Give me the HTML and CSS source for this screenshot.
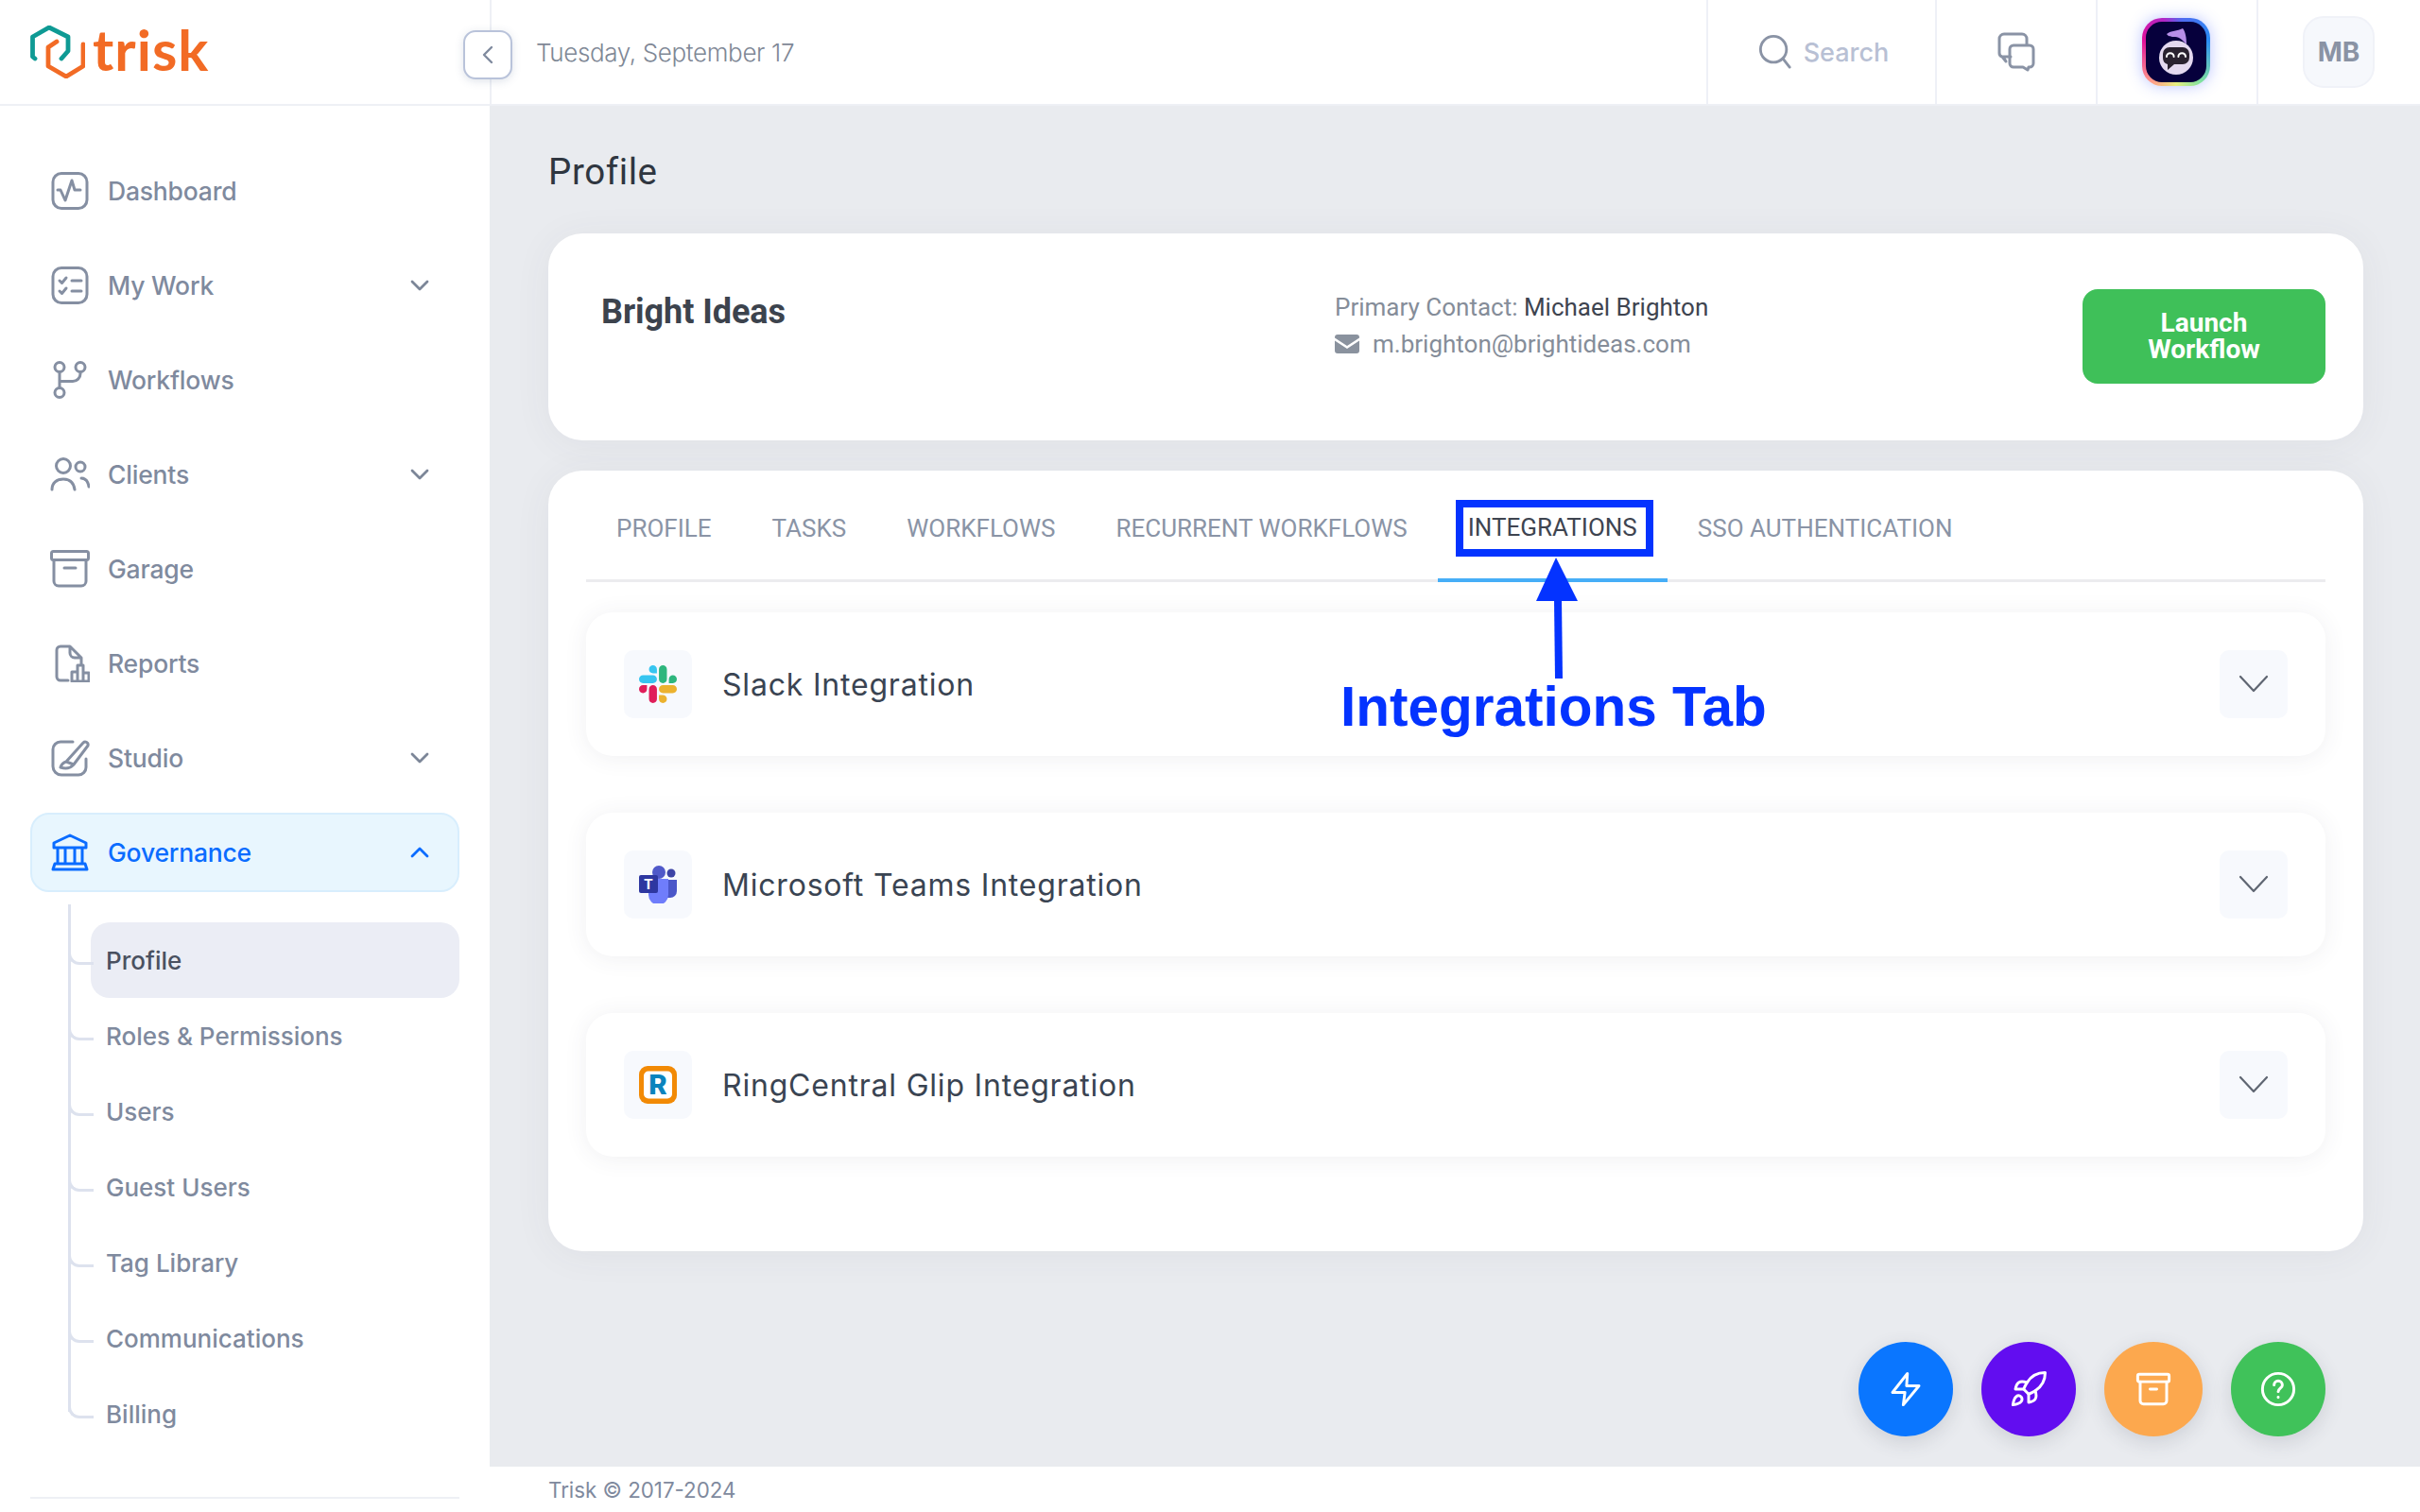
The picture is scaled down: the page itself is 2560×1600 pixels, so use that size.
FILE: index.html
```html
<!DOCTYPE html>
<html lang="en">
<head>
<meta charset="utf-8">
<title>Trisk - Profile</title>
<link rel="stylesheet" href="styles.css">
</head>
<body>
<div class="app">
  <header class="topbar">
    <div class="brand">
      <svg class="logo-mark" viewBox="0 0 58 56" fill="none" stroke-width="4.800" stroke-linecap="round" stroke-linejoin="round">
        <path d="M5 35 L2.500 33 V12 L20 2 L40 12 V27 L33 35" stroke="#0e9a94"/>
        <path d="M28 17 L19 23 V43 L38 54 L56 43 V20" stroke="#f26b25"/>
      </svg>
      <span class="logo-word">trisk</span>
    </div>
    <button class="collapse" type="button" aria-label="Collapse">
      <svg viewBox="0 0 14 20" fill="none" stroke="#7f8a9e" stroke-width="2.400" stroke-linecap="round" stroke-linejoin="round"><path d="M11 2 3 10l8 8"/></svg>
    </button>
    <div class="date">Tuesday, September 17</div>
    <div class="cell cell-search">
      <svg class="ico-search" viewBox="0 0 38 38" fill="none" stroke="#8a93a5" stroke-width="3" stroke-linecap="round"><circle cx="17" cy="16" r="14.500"/><path d="M28 27l7 9"/></svg>
      <span class="search-text">Search</span>
    </div>
    <div class="cell cell-chat">
      <svg class="ico-chat" viewBox="0 0 40 42" fill="none" stroke="#8a93a5" stroke-width="3" stroke-linejoin="round" stroke-linecap="round"><path d="M14 26H6l3 5-4-5a4 4 0 0 1-3-4V7a5 5 0 0 1 5-5h19a5 5 0 0 1 5 5v6"/><path d="M17 14h17a4 4 0 0 1 4 4v15a4 4 0 0 1-4 4h-1l-1 3-5-3H17a4 4 0 0 1-4-4V18a4 4 0 0 1 4-4z"/></svg>
    </div>
    <div class="cell cell-bot">
      <div class="bot">
        <svg viewBox="0 0 64 64">
          <path d="M22 13c5-4 11-3 17-6 3 4 4 10 4 17-4-4-7-8-12-8-4 0-7 0-9-3z" fill="#b78fe8"/>
          <circle cx="32" cy="38" r="18" fill="#e4d9f0"/>
          <path d="M25 27h14a7 7 0 0 1 7 7v4a7 7 0 0 1-7 7H30l-7 6v-6a7 7 0 0 1-5-7v-4a7 7 0 0 1 7-7z" fill="#2a2230"/>
          <path d="M22 37a3.800 3.800 0 0 1 7.600 0M34.400 37a3.800 3.800 0 0 1 7.600 0" fill="none" stroke="#fff" stroke-width="2" stroke-linecap="round"/>
        </svg>
      </div>
    </div>
    <div class="cell cell-user"><div class="initials">MB</div></div>
  </header>

  <div class="shell">
    <aside class="sidebar">
      <nav class="nav">
        <a class="nav-item">
          <svg class="nav-ico" viewBox="0 0 42 40" fill="none"><rect x="3" y="1.500" width="36" height="37" rx="9"/><path d="M8 19h3l5 11 7-21 3 10h6"/></svg>
          <span class="nav-label">Dashboard</span>
        </a>
        <a class="nav-item">
          <svg class="nav-ico" viewBox="0 0 42 40" fill="none"><rect x="3" y="1.500" width="36" height="37" rx="9"/><path d="M10 15l2.500 2.500L17 12M10 26l2.500 2.500L17 23M23 15h10M23 26h10"/></svg>
          <span class="nav-label">My Work</span>
          <svg class="chev" viewBox="0 0 20 12" fill="none"><path d="M2 2l8 8 8-8"/></svg>
        </a>
        <a class="nav-item">
          <svg class="nav-ico" viewBox="0 0 42 40" fill="none"><circle cx="10" cy="6.500" r="5"/><circle cx="32" cy="6.500" r="5"/><circle cx="10" cy="33.500" r="5"/><path d="M10 11.500v17M32 11.500v2a8 8 0 0 1-8 8H10"/></svg>
          <span class="nav-label">Workflows</span>
        </a>
        <a class="nav-item">
          <svg class="nav-ico" viewBox="0 0 42 40" fill="none"><circle cx="14" cy="11" r="7.500"/><circle cx="32" cy="12" r="5"/><path d="M2 36c0-7 5-11 12-11s11 4 12 11M33 24c4 0 7 3 8 9"/></svg>
          <span class="nav-label">Clients</span>
          <svg class="chev" viewBox="0 0 20 12" fill="none"><path d="M2 2l8 8 8-8"/></svg>
        </a>
        <a class="nav-item">
          <svg class="nav-ico" viewBox="0 0 42 40" fill="none"><rect x="1.500" y="1.500" width="39" height="9" rx="2"/><path d="M4 10.500V33a5 5 0 0 0 5 5h24a5 5 0 0 0 5-5V10.500M15 19h12"/></svg>
          <span class="nav-label">Garage</span>
        </a>
        <a class="nav-item">
          <svg class="nav-ico" viewBox="0 0 42 40" fill="none"><path d="M19 38H11a4 4 0 0 1-4-4V6a4 4 0 0 1 4-4h10l12 12v7M21 2v7a5 5 0 0 0 5 5h7"/><path d="M23 39V29h6v10M29 39V22h6v17M35 30h6v9H23"/></svg>
          <span class="nav-label">Reports</span>
        </a>
        <a class="nav-item">
          <svg class="nav-ico" viewBox="0 0 42 40" fill="none"><path d="M24 3H11a8 8 0 0 0-8 8v18a9 9 0 0 0 9 9h18a8 8 0 0 0 8-8V21"/><path d="M17 24L35 4a3 3 0 0 1 5 3L25 27M17 24c-4 1-5 3-6 6 3 1 9 2 13-2l1-1-8-3z"/></svg>
          <span class="nav-label">Studio</span>
          <svg class="chev" viewBox="0 0 20 12" fill="none"><path d="M2 2l8 8 8-8"/></svg>
        </a>
        <a class="nav-item nav-item-active">
          <svg class="nav-ico" viewBox="0 0 42 40" fill="none"><path d="M4 15V10L21 2l17 8v5zM8 15v17M16 15v17M26 15v17M34 15v17M5 32h32M3 38l2-6h32l2 6z"/></svg>
          <span class="nav-label">Governance</span>
          <svg class="chev" viewBox="0 0 20 12" fill="none"><path d="M2 10l8-8 8 8"/></svg>
        </a>
      </nav>
      <div class="subnav">
        <a class="sub-item sub-item-active">Profile</a>
        <a class="sub-item">Roles &amp; Permissions</a>
        <a class="sub-item">Users</a>
        <a class="sub-item">Guest Users</a>
        <a class="sub-item">Tag Library</a>
        <a class="sub-item">Communications</a>
        <a class="sub-item">Billing</a>
      </div>
      <div class="side-rule"></div>
    </aside>

    <main class="main">
      <div class="content">
        <h1 class="page-title">Profile</h1>
        <section class="card card-head">
          <div class="org">Bright Ideas</div>
          <div class="contact">
            <div class="contact-line">Primary Contact: <span class="contact-name">Michael Brighton</span></div>
            <div class="contact-line contact-mail">
              <svg class="mail" viewBox="0 0 26 20"><path d="M0 3a3 3 0 0 1 3-3h20a3 3 0 0 1 3 3v.500L13 12 0 3.500zM0 6.500V17a3 3 0 0 0 3 3h20a3 3 0 0 0 3-3V6.500L13 15z" fill="#8a929e"/></svg>
              m.brighton@brightideas.com
            </div>
          </div>
          <button class="launch" type="button">Launch<br>Workflow</button>
        </section>

        <section class="card card-tabs">
          <div class="tabs">
            <a class="tab">PROFILE</a>
            <a class="tab">TASKS</a>
            <a class="tab">WORKFLOWS</a>
            <a class="tab">RECURRENT WORKFLOWS</a>
            <a class="tab tab-active">INTEGRATIONS</a>
            <a class="tab">SSO AUTHENTICATION</a>
          </div>
          <div class="rows">
            <div class="row">
              <div class="row-ico">
                <svg class="brand-ico" viewBox="0 0 122.800 122.800">
                  <path d="M25.800 77.600c0 7.100-5.800 12.900-12.900 12.900S0 84.700 0 77.600s5.800-12.900 12.900-12.900h12.900v12.900zm6.500 0c0-7.100 5.800-12.900 12.900-12.900s12.900 5.800 12.900 12.900v32.300c0 7.100-5.800 12.900-12.900 12.900s-12.900-5.800-12.900-12.900V77.600z" fill="#e01e5a"/>
                  <path d="M45.200 25.800c-7.100 0-12.900-5.800-12.900-12.900S38.100 0 45.200 0s12.900 5.800 12.900 12.900v12.900H45.200zm0 6.500c7.100 0 12.900 5.800 12.900 12.900s-5.800 12.900-12.900 12.900H12.900C5.800 58.100 0 52.300 0 45.200s5.800-12.900 12.900-12.900h32.300z" fill="#36c5f0"/>
                  <path d="M97 45.200c0-7.100 5.800-12.900 12.900-12.900s12.900 5.800 12.900 12.900-5.800 12.900-12.900 12.900H97V45.200zm-6.500 0c0 7.100-5.800 12.900-12.900 12.900s-12.900-5.800-12.900-12.900V12.900C64.700 5.800 70.500 0 77.600 0s12.900 5.800 12.900 12.900v32.300z" fill="#2eb67d"/>
                  <path d="M77.600 97c7.100 0 12.900 5.800 12.900 12.900s-5.800 12.900-12.900 12.900-12.900-5.800-12.900-12.900V97h12.900zm0-6.500c-7.100 0-12.900-5.800-12.900-12.900s5.800-12.900 12.900-12.900h32.300c7.100 0 12.900 5.800 12.900 12.900s-5.800 12.900-12.900 12.900H77.600z" fill="#ecb22e"/>
                </svg>
              </div>
              <div class="row-label">Slack Integration</div>
              <div class="row-toggle"><svg viewBox="0 0 32 20" fill="none"><path d="M2 2l14 15L30 2"/></svg></div>
            </div>
            <div class="row">
              <div class="row-ico">
                <svg class="brand-ico" viewBox="0 0 40 40">
                  <circle cx="34" cy="8" r="4.500" fill="#3d44a6"/>
                  <path d="M27 15h13v12a7 7 0 0 1-7 7h-6z" fill="#4b57c9"/>
                  <circle cx="21" cy="7" r="7" fill="#5059c9"/>
                  <path d="M10 14h21v17a10 10 0 0 1-21 0z" fill="#6f7dfb"/>
                  <rect x="0" y="10" width="20" height="19" rx="2" fill="#2e37a0"/>
                  <text class="teams-t" x="10" y="24.500">T</text>
                </svg>
              </div>
              <div class="row-label">Microsoft Teams Integration</div>
              <div class="row-toggle"><svg viewBox="0 0 32 20" fill="none"><path d="M2 2l14 15L30 2"/></svg></div>
            </div>
            <div class="row">
              <div class="row-ico">
                <svg class="brand-ico" viewBox="0 0 40 40">
                  <rect x="0" y="0" width="40" height="40" rx="9" fill="#f28a05"/>
                  <rect x="5" y="5.500" width="30" height="29" rx="5" fill="#fff"/>
                  <text class="rc-r" x="20" y="30">R</text>
                </svg>
              </div>
              <div class="row-label">RingCentral Glip Integration</div>
              <div class="row-toggle"><svg viewBox="0 0 32 20" fill="none"><path d="M2 2l14 15L30 2"/></svg></div>
            </div>
          </div>
        </section>
      </div>
      <footer class="footer">Trisk © 2017-2024</footer>
    </main>
  </div>

  <div class="fabs">
    <button class="fab fab-blue" type="button"><svg viewBox="0 0 24 24"><path d="M13 2.500 4 14h7.500l-1 7.500L20 10h-7.500z"/></svg></button>
    <button class="fab fab-purple" type="button"><svg viewBox="0 0 24 24"><path d="M4.500 16.500c-1.500 1.260-2 5-2 5s3.740-.5 5-2c.71-.84.7-2.130-.09-2.910a2.180 2.180 0 0 0-2.910-.09z"/><path d="m12 15-3-3a22 22 0 0 1 2-3.950A12.880 12.880 0 0 1 22 2c0 2.720-.78 7.500-6 11a22.350 22.350 0 0 1-4 2z"/><path d="M9 12H4s.55-3.030 2-4c1.620-1.080 5 0 5 0"/><path d="M12 15v5s3.030-.55 4-2c1.080-1.620 0-5 0-5"/></svg></button>
    <button class="fab fab-orange" type="button"><svg viewBox="0 0 24 24"><rect x="2.500" y="3" width="19" height="4.500" rx="1"/><path d="M4 7.500V19a2 2 0 0 0 2 2h12a2 2 0 0 0 2-2V7.500M10 12h4"/></svg></button>
    <button class="fab fab-green" type="button"><svg viewBox="0 0 24 24"><circle cx="12" cy="12" r="9.500"/><path d="M9.500 9.500a2.500 2.500 0 0 1 5 0c0 1.700-2.500 2-2.500 4M12 16.800v.2"/></svg></button>
  </div>

  <div class="mark-box"></div>
  <svg class="mark-arrow" viewBox="0 0 50 130"><path d="M23 0 2 46h44z" fill="#0433ff"/><path d="M25 44l1 84" stroke="#0433ff" stroke-width="8" fill="none"/></svg>
  <div class="mark-label">Integrations Tab</div>
</div>
</body>
</html>
```

FILE: styles.css
```css
* { box-sizing: border-box; }
html, body { margin: 0; padding: 0; }
body { font-family: "Inter", "Liberation Sans", sans-serif; background: #fff; }
a { text-decoration: none; color: inherit; }
button { font-family: inherit; border: 0; padding: 0; }

.app { position: relative; width: 2560px; height: 1600px; overflow: hidden; display: flex; flex-direction: column; background: #fff; }

/* top bar */
.topbar { height: 112px; flex: none; display: flex; align-items: stretch; background: #fff; border-bottom: 2px solid #eef0f5; position: relative; }
.brand { width: 520px; flex: none; display: flex; align-items: center; padding-left: 32px; border-right: 2px solid #eef0f5; }
.logo-mark { width: 58px; height: 56px; margin-right: 8px; }
.logo-word { font-family: "Lato", sans-serif; font-weight: 700; font-size: 60px; line-height: 60px; color: #f26b25; letter-spacing: 1px; margin-top: -6px; }
.collapse { position: absolute; left: 490px; top: 32px; width: 52px; height: 52px; border-radius: 13px; background: #fff; border: 2px solid #b9c3da; box-shadow: 0 2px 10px rgba(80, 100, 140, .18); display: flex; align-items: center; justify-content: center; }
.collapse svg { width: 14px; height: 20px; }
.date { flex: 1; display: flex; align-items: center; padding-left: 47px; font-size: 26px; font-weight: 300; color: #7f8896; letter-spacing: -.35px; }
.cell { flex: none; display: flex; align-items: center; justify-content: center; border-left: 2px solid #eef0f7; }
.cell-search { width: 242px; padding-left: 4px; }
.ico-search { width: 36px; height: 36px; margin-right: 12px; }
.search-text { font-size: 27px; font-weight: 500; color: #b8c0d4; }
.cell-chat { width: 170px; }
.ico-chat { width: 40px; height: 42px; }
.cell-bot { width: 170px; padding-right: 2px; }
.bot { width: 72px; height: 72px; border-radius: 21px; padding: 4px; background: conic-gradient(from 10deg, #4f6bf0, #2a8cf5 60deg, #80e0a0 130deg, #e8f080 170deg, #ff9a8a 210deg, #e0109a 280deg, #b028c8 330deg, #4f6bf0); box-shadow: 0 0 16px rgba(60, 90, 255, .35); }
.bot svg { display: block; width: 100%; height: 100%; background: #06003c; border-radius: 17px; }
.cell-user { width: 173px; justify-content: flex-start; padding-left: 47px; }
.initials { width: 76px; height: 76px; border-radius: 22px; background: #f6f8fc; border: 2px solid #f0f2f8; display: flex; align-items: center; justify-content: center; font-size: 28px; font-weight: 700; color: #8a93a4; }

/* shell */
.shell { flex: 1; display: flex; min-height: 0; }
.sidebar { width: 520px; flex: none; padding: 48px 32px 0; border-right: 2px solid #eef0f5; background: #fff; }
.nav { display: flex; flex-direction: column; gap: 16px; width: 454px; }
.nav-item { height: 84px; display: flex; align-items: center; padding: 0 30px 0 19px; border: 2px solid transparent; border-radius: 20px; font-size: 26.500px; font-weight: 500; color: #7f8a9e; letter-spacing: -.2px; }
.nav-ico { width: 42px; height: 40px; flex: none; stroke: #858fa2; stroke-width: 3; stroke-linecap: round; stroke-linejoin: round; }
.nav-label { flex: 1; margin-left: 19px; }
.chev { width: 20px; height: 12px; flex: none; stroke: #7c8698; stroke-width: 2.800; stroke-linecap: round; stroke-linejoin: round; }
.nav-item-active { background: #e8f6fe; border-color: #d8eefd; color: #0a6cff; }
.nav-item-active .nav-ico { stroke: #0a6cff; }
.nav-item-active .chev { stroke: #0a6cff; }

.subnav { position: relative; width: 414px; margin: 13px 0 0 40px; padding: 19px 0 0 24px; }
.subnav::before { content: ""; position: absolute; left: 0; top: 0; bottom: 42px; width: 3px; background: #dde2ee; }
.sub-item { position: relative; display: flex; align-items: center; height: 80px; padding-left: 16px; border-radius: 20px; font-size: 26px; font-weight: 500; color: #7f8a9e; }
.sub-item::before { content: ""; position: absolute; left: -24px; top: calc(50% - 12px); width: 24px; height: 14px; border-left: 3px solid #dde2ee; border-bottom: 3px solid #dde2ee; border-bottom-left-radius: 12px; }
.sub-item-active { background: #ebedf5; color: #4a5160; }
.side-rule { height: 2px; width: 454px; margin-top: 48px; background: #eef0f5; }

/* main */
.main { flex: 1; min-width: 0; display: flex; flex-direction: column; background: #e9ebef; margin-left: -2px; }
.content { flex: 1; padding: 47px 60px 0 62px; min-height: 0; }
.page-title { margin: 0 0 42px; font-family: "Roboto", sans-serif; font-size: 38.500px; line-height: 46px; font-weight: 400; color: #2f3640; letter-spacing: .6px; }
.card { background: #fff; border-radius: 36px; box-shadow: 0 4px 40px rgba(60, 70, 90, .06); }
.card-head { height: 219px; display: grid; grid-template-columns: 776px 1fr 257px; padding: 59px 40px 0 56px; align-items: start; font-family: "Roboto", sans-serif; }
.org { font-size: 36px; line-height: 44px; font-weight: 700; color: #3c434d; margin-top: 2px; letter-spacing: -.05px; }
.contact { font-size: 26px; color: #858d99; margin-top: -1px; }
.contact-line { line-height: 40px; }
.contact-mail { display: flex; align-items: center; margin-top: -1px; }
.contact-name { color: #3e4450; }
.mail { width: 26px; height: 20px; margin-right: 14px; }
.launch { width: 257px; height: 100px; border-radius: 16px; background: #3fc059; color: #fff; font-family: "Roboto", sans-serif; font-size: 28px; line-height: 28px; font-weight: 700; }

.card-tabs { height: 826px; margin-top: 32px; padding: 0 40px; }
.tabs { display: flex; height: 118px; border-bottom: 3px solid #ececef; font-family: "Roboto", sans-serif; font-size: 26px; color: #8a94a6; }
.tab { padding: 6px 32px 0; height: 118px; display: flex; align-items: center; border-bottom: 3px solid transparent; }
.tab-active { color: #3e4450; border-bottom: 4px solid #46aef7; }
.rows { display: flex; flex-direction: column; gap: 60px; margin-top: 32px; }
.row { height: 152px; display: flex; align-items: center; padding: 0 40px; background: #fff; border-radius: 28px; box-shadow: 0 2px 24px rgba(60, 70, 90, .08); }
.row-ico { width: 72px; height: 72px; flex: none; display: flex; align-items: center; justify-content: center; border-radius: 10px; background: #f7f9fd; }
.brand-ico { width: 40px; height: 40px; }
.teams-t { font-family: "Roboto", sans-serif; font-weight: 700; font-size: 15px; fill: #fff; text-anchor: middle; }
.rc-r { font-family: "Roboto", sans-serif; font-weight: 900; font-size: 30px; fill: #0b84bd; text-anchor: middle; }
.row-label { flex: 1; margin-left: 32px; font-size: 32px; font-weight: 400; color: #3a4452; letter-spacing: .8px; }
.row-toggle { width: 72px; height: 72px; flex: none; display: flex; align-items: center; justify-content: center; border-radius: 10px; background: #f7f9fd; }
.row-toggle svg { width: 32px; height: 20px; stroke: #5f6672; stroke-width: 2.200; stroke-linecap: round; stroke-linejoin: round; }

.footer { height: 48px; flex: none; display: flex; align-items: center; padding-left: 62px; background: #fff; font-size: 22.300px; color: #7f8a9e; }

/* floating buttons */
.fabs { position: absolute; left: 1966px; top: 1420px; display: flex; gap: 30px; }
.fab { width: 100px; height: 100px; border-radius: 50%; display: flex; align-items: center; justify-content: center; box-shadow: 0 6px 20px rgba(60, 70, 90, .16); }
.fab svg { width: 42px; height: 42px; fill: none; stroke: #fff; stroke-width: 1.700; stroke-linecap: round; stroke-linejoin: round; }
.fab-blue { background: #0a76ff; }
.fab-purple { background: #620df0; }
.fab-orange { width: 104px; background: #fca84e; }
.fab-green { background: #40c25a; }

/* annotation */
.mark-box { position: absolute; left: 1540px; top: 529px; width: 209px; height: 60px; border: 8px solid #0433ff; }
.mark-arrow { position: absolute; left: 1623px; top: 590px; width: 50px; height: 130px; }
.mark-label { position: absolute; left: 1418px; top: 712px; font-family: "Liberation Sans", Arial, sans-serif; font-weight: 700; font-size: 58.500px; line-height: 72px; color: #0433ff; white-space: nowrap; }
```
